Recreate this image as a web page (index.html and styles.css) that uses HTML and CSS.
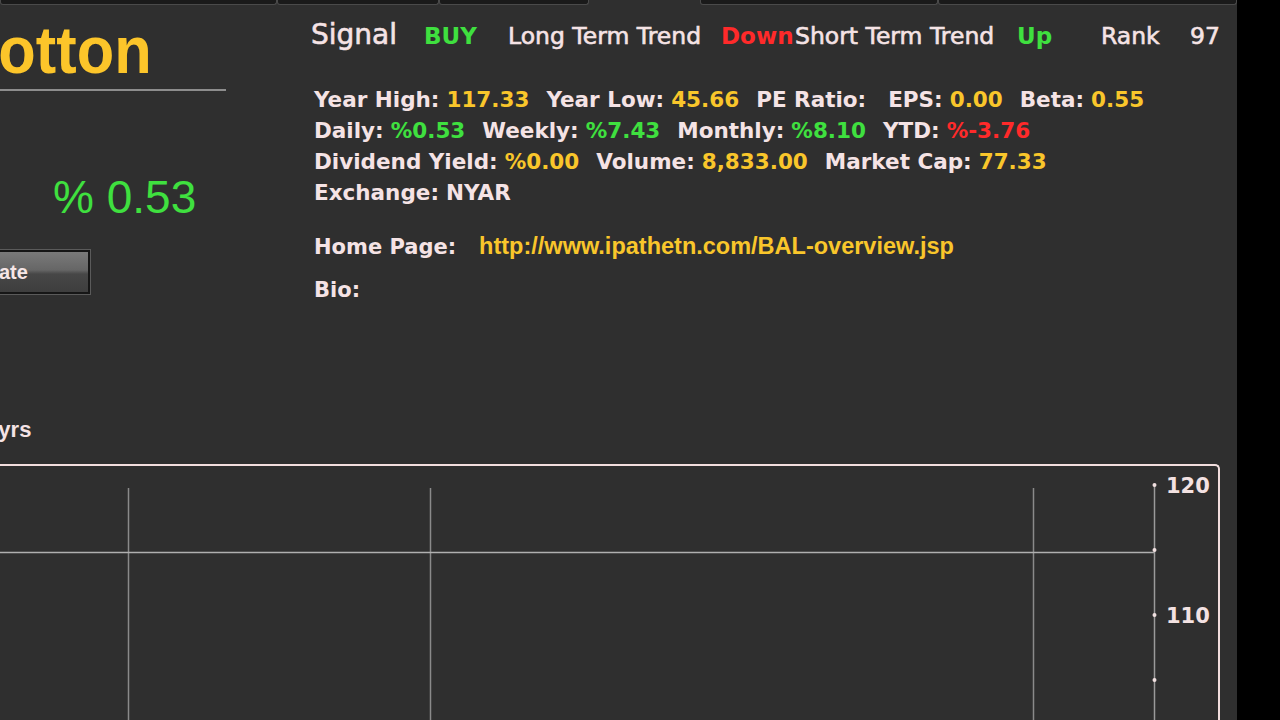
FILE: index.html
```html
<!DOCTYPE html>
<html>
<head>
<meta charset="utf-8">
<link rel="stylesheet" href="styles.css">
</head>
<body>
<div class="app">
  <div class="tabs">
    <div class="tab t1"></div><div class="tab t2"></div><div class="tab t3"></div><div class="tab-gap"></div><div class="tab t4"></div><div class="tab t5"></div>
  </div>
  <div class="upper">
    <div class="left">
      <h1 class="title">Cotton</h1>
      <div class="rule"></div>
      <div class="change">% 0.53</div>
      <button class="update">Update</button>
    </div>
    <div class="right">
      <div class="signals">
        <span class="cell c-signal">Signal</span>
        <span class="cell c-buy green b">BUY</span>
        <span class="cell c-long">Long Term Trend</span>
        <span class="cell c-down red b">Down</span>
        <span class="cell c-short">Short Term Trend</span>
        <span class="cell c-up green b">Up</span>
        <span class="cell c-rank">Rank</span>
        <span class="cell c-num">97</span>
      </div>
      <div class="stats">
        <div class="row">
          <span class="pair"><span class="k">Year High:</span><span class="yellow">117.33</span></span>
          <span class="pair"><span class="k">Year Low:</span><span class="yellow">45.66</span></span>
          <span class="pair"><span class="k">PE Ratio:</span><span class="yellow"></span></span>
          <span class="pair pe-gap"><span class="k">EPS:</span><span class="yellow">0.00</span></span>
          <span class="pair"><span class="k">Beta:</span><span class="yellow">0.55</span></span>
        </div>
        <div class="row">
          <span class="pair"><span class="k">Daily:</span><span class="green">%0.53</span></span>
          <span class="pair"><span class="k">Weekly:</span><span class="green">%7.43</span></span>
          <span class="pair"><span class="k">Monthly:</span><span class="green">%8.10</span></span>
          <span class="pair"><span class="k">YTD:</span><span class="red">%-3.76</span></span>
        </div>
        <div class="row">
          <span class="pair"><span class="k">Dividend Yield:</span><span class="yellow">%0.00</span></span>
          <span class="pair"><span class="k">Volume:</span><span class="yellow">8,833.00</span></span>
          <span class="pair"><span class="k">Market Cap:</span><span class="yellow">77.33</span></span>
        </div>
        <div class="row">
          <span class="pair"><span class="k">Exchange:</span><span>NYAR</span></span>
        </div>
      </div>
      <div class="home"><span class="k">Home Page:</span><a class="link">http://www.ipathetn.com/BAL-overview.jsp</a></div>
      <div class="bio"><span class="k">Bio:</span></div>
    </div>
  </div>
  <div class="range">5 yrs</div>
  <div class="chart">
    <svg class="plot" width="1236" height="260" viewBox="0 0 1236 260">
      <line x1="146.5" y1="22" x2="146.5" y2="260" stroke="#8a8a8a" stroke-width="1.5"/>
      <line x1="448.5" y1="22" x2="448.5" y2="260" stroke="#8a8a8a" stroke-width="1.5"/>
      <line x1="1051.5" y1="22" x2="1051.5" y2="260" stroke="#8a8a8a" stroke-width="1.5"/>
      <line x1="0" y1="86.5" x2="1173" y2="86.5" stroke="#b0b0b0" stroke-width="1.5"/>
      <line x1="1172.5" y1="19" x2="1172.5" y2="260" stroke="#9a9a9a" stroke-width="1.5"/>
      <circle cx="1172.5" cy="19" r="2" fill="#f0e0e0"/>
      <circle cx="1172.5" cy="84" r="2" fill="#f0e0e0"/>
      <circle cx="1172.5" cy="149" r="2" fill="#f0e0e0"/>
      <circle cx="1172.5" cy="214" r="2" fill="#f0e0e0"/>
      <text class="axis" x="1184" y="27">120</text>
      <text class="axis" x="1184" y="157">110</text>
    </svg>
  </div>
</div>
</body>
</html>
```

FILE: styles.css
```css
body {
  margin: 0;
  background: #000;
  width: 1280px;
  height: 720px;
  overflow: hidden;
}

.app {
  width: 1237px;
  height: 720px;
  background: #2f2f2f;
  overflow: hidden;
  display: flex;
  flex-direction: column;
  font-family: "DejaVu Sans", sans-serif;
  color: #f5e3e5;
}

/* top tab strip */
.tabs {
  display: flex;
  height: 5px;
  flex: none;
}
.tab {
  height: 5px;
  box-sizing: border-box;
  background: #1a1a1a;
  border: 1px solid #4a4a4a;
  border-top: none;
  border-radius: 0 0 3px 3px;
}
.t1 { width: 277px; }
.t2 { width: 162px; }
.t3 { width: 150px; }
.tab-gap { width: 111px; }
.t4 { width: 238px; }
.t5 { width: 299px; }

.upper {
  display: flex;
  height: 410px;
  flex: none;
}

/* left column */
.left {
  width: 311px;
  flex: none;
  display: flex;
  flex-direction: column;
  align-items: flex-start;
}
.title {
  margin: 12px 0 0 -46px;
  font: bold 66px/66px "Liberation Sans", sans-serif;
  color: #fcc52a;
  transform: scaleX(0.93);
  transform-origin: 0 0;
  white-space: nowrap;
}
.rule {
  margin-top: 6px;
  width: 226px;
  height: 2px;
  background: #8d8d8d;
}
.change {
  margin: 83px 0 0 53px;
  font: 46px/46px "Liberation Sans", sans-serif;
  color: #3fe03f;
  white-space: nowrap;
}
.update {
  margin: 30px 0 0 -102px;
  width: 192px;
  height: 44px;
  box-sizing: border-box;
  border: 2px solid #161616;
  box-shadow: 0 0 0 1px #5a5a5a;
  background: linear-gradient(#7a7a7a 0%, #666 45%, #474747 55%, #3e3e3e 100%);
  color: #f6e6e6;
  font: bold 20px "Liberation Sans", sans-serif;
  padding: 0;
}

/* right column */
.right {
  flex: 1;
  display: flex;
  flex-direction: column;
  padding-top: 13px;
}
.signals {
  display: flex;
  align-items: baseline;
  line-height: 34px;
  font-size: 23.5px;
  white-space: nowrap;
  -webkit-text-stroke: 0.6px currentColor;
}
.cell { flex: none; }
.c-signal { width: 113px; font-size: 28px; }
.c-buy { width: 84px; }
.c-long { width: 213px; }
.c-down { width: 74px; }
.c-short { width: 222px; }
.c-up { width: 84px; }
.c-rank { width: 89px; }
.b { font-weight: bold; -webkit-text-stroke: 0; font-size: 23px; }

.green { color: #3fe03f; }
.red { color: #ff2a2a; }
.yellow { color: #f9c62b; }

.stats {
  margin-top: 31px;
  padding-left: 3px;
  font: bold 21.5px "DejaVu Sans", sans-serif;
}
.row {
  display: flex;
  height: 31px;
  line-height: 31px;
  white-space: nowrap;
}
.pair {
  display: flex;
  gap: 7px;
  margin-right: 17px;
}
.pe-gap { margin-left: -2px; }

.home {
  margin-top: 24px;
  padding-left: 3px;
  display: flex;
  align-items: baseline;
  gap: 23px;
  font: bold 21px/31px "DejaVu Sans", sans-serif;
}
.link {
  font: bold 23.5px "Liberation Sans", sans-serif;
  color: #f9c62b;
  text-decoration: none;
}
.bio {
  margin-top: 12px;
  padding-left: 3px;
  font: bold 21px/31px "DejaVu Sans", sans-serif;
}

/* chart */
.range {
  flex: none;
  margin: 2px 0 0 -20px;
  font: bold 22px/26px "Liberation Sans", sans-serif;
  color: #f5e3e5;
}
.chart {
  flex: none;
  margin: 21px 0 0 -20px;
  width: 1240px;
  height: 262px;
  box-sizing: border-box;
  border: 2px solid #f2dede;
  border-bottom: none;
  border-radius: 0 5px 0 0;
}
.plot { display: block; }
.axis {
  font: bold 21px "DejaVu Sans", sans-serif;
  fill: #f3e2e2;
}
```
